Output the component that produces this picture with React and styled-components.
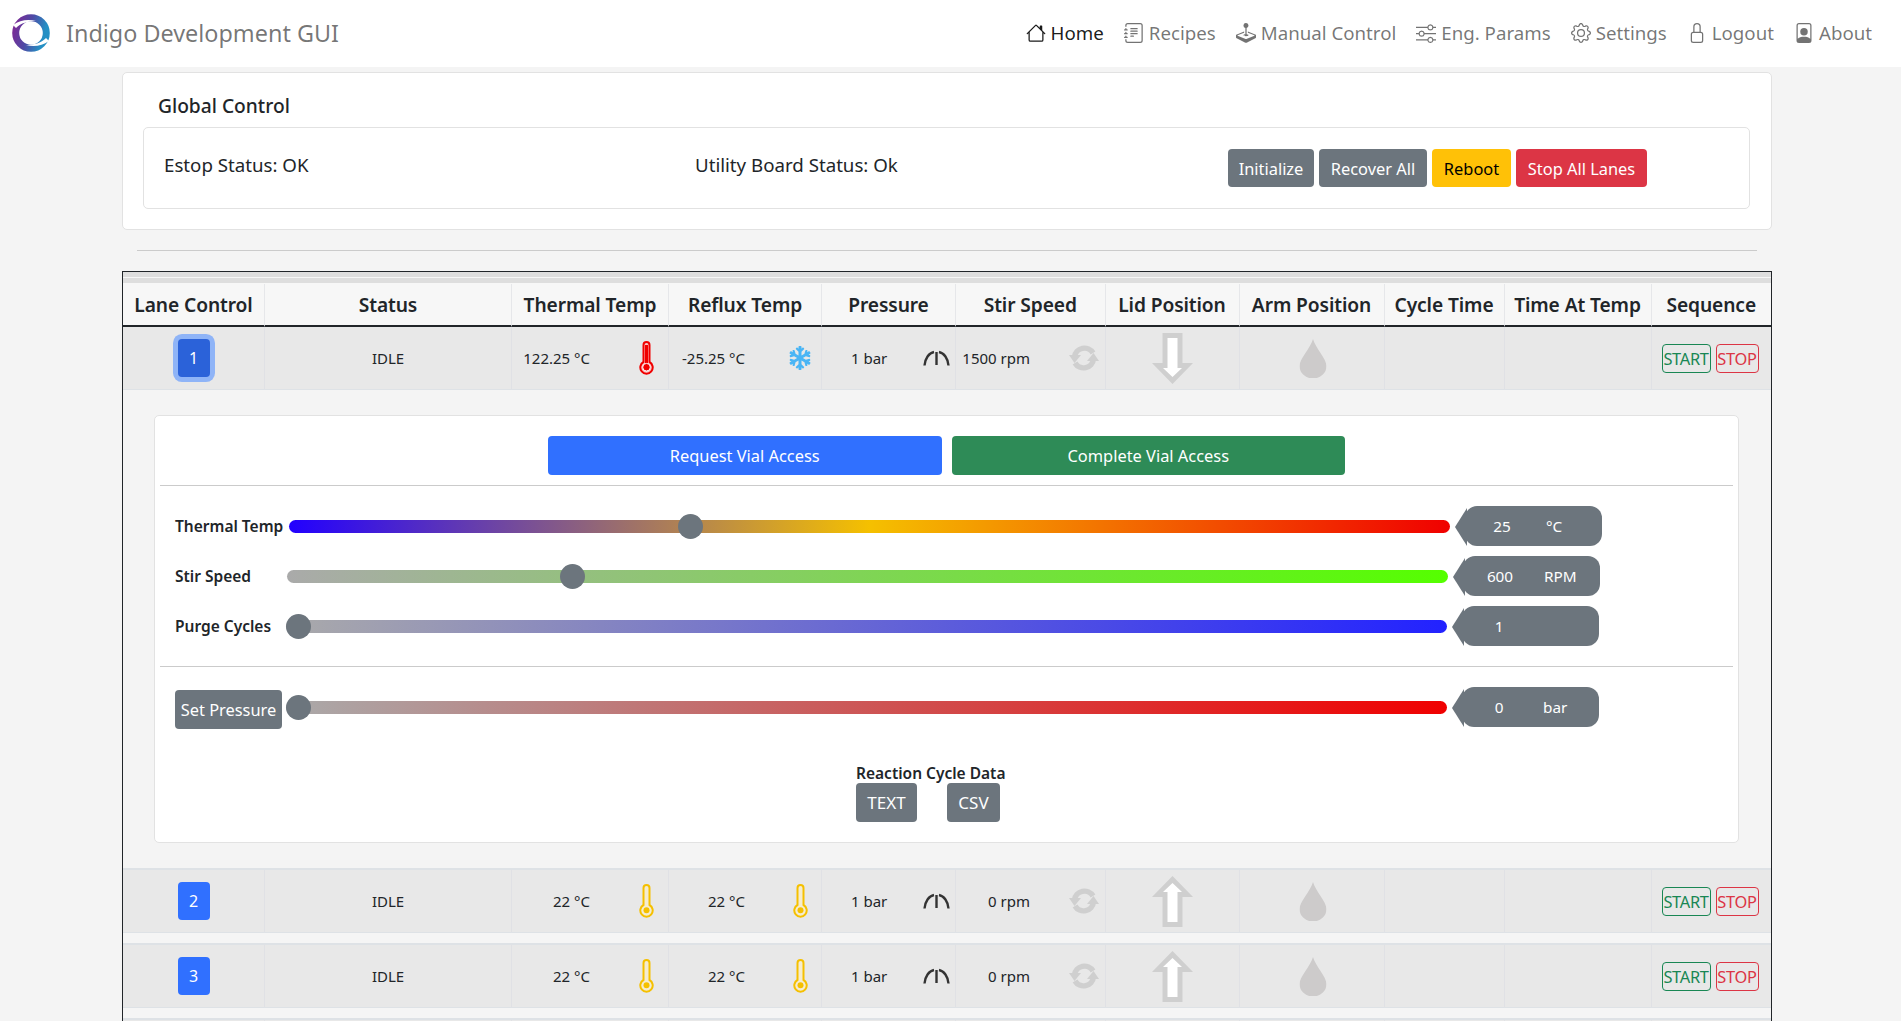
import styled, { createGlobalStyle } from "styled-components";
import { BsHouse, BsJournalText, BsJoystick, BsSliders, BsGear, BsLock, BsFilePerson } from "react-icons/bs";
import { FaSnowflake } from "react-icons/fa";

const GlobalStyle = createGlobalStyle`
  html, body {
    margin: 0;
    height: 100%;
    overflow: hidden;
    font-family: "Noto Sans", "Open Sans", sans-serif;
    font-size: 15px;
    color: #212529;
    background: #f4f4f4;
  }
  * { box-sizing: border-box; }
`;

const Page = styled.div`
  height: 100vh;
  overflow-y: scroll;
  background: #f4f4f4;

  &::-webkit-scrollbar { width: 4px; }
  &::-webkit-scrollbar-track { background: #f1f1f1; }
  &::-webkit-scrollbar-thumb { background: #c1c1c1; }
  &::-webkit-scrollbar-button:single-button { height: 17px; background: #f1f1f1; }
`;

const Navbar = styled.nav`
  height: 67px;
  background: #fff;
  display: flex;
  align-items: center;
  justify-content: space-between;
  padding: 0 29px 2px 12px;
`;

const Brand = styled.div`
  display: flex;
  align-items: center;
  gap: 16px;
  font-size: 23.4px;
  color: rgba(0, 0, 0, 0.55);
`;

const NavLinks = styled.div`
  display: flex;
  align-items: center;
  gap: 20px;
`;

const NavLink = styled.a`
  display: flex;
  align-items: center;
  gap: 5px;
  font-size: 18.7px;
  color: ${(p) => (p.$active ? "rgba(0,0,0,.9)" : "rgba(0,0,0,.55)")};

  svg { font-size: 20px; }
`;

const Main = styled.main`
  width: 1650px;
  margin-left: 122px;
  min-height: 2068px;
  padding-top: 5px;
`;

const GlobalCard = styled.section`
  height: 158px;
  background: #fff;
  border: 1px solid #e2e2e2;
  border-radius: 5px;
  padding: 0 21px 20px 20px;
  display: flex;
  flex-direction: column;
`;

const CardTitle = styled.h2`
  margin: 0;
  height: 54px;
  line-height: 66px;
  padding-left: 15px;
  font-size: 19.2px;
  font-weight: 500;
`;

const InnerCard = styled.div`
  flex: 1;
  border: 1px solid #e2e2e2;
  border-radius: 5px;
  padding: 21px 0 0 20px;
  display: grid;
  grid-template-columns: 531px 533px auto;
  align-items: start;
`;

const StatusText = styled.div`
  font-size: 18.7px;
  line-height: 24px;
  margin-top: 4px;
`;

const ButtonRow = styled.div`
  display: flex;
  gap: 5px;
`;

const colors = {
  grey: ["#6c757d", "#fff"],
  yellow: ["#ffc107", "#000"],
  red: ["#dc3545", "#fff"],
  blue: ["#3070ff", "#fff"],
  green: ["#2e8b57", "#fff"],
};

const Button = styled.button`
  height: ${(p) => p.$h || 38}px;
  width: ${(p) => p.$w}px;
  padding: 0;
  border: 0;
  border-radius: 4px;
  font-family: inherit;
  font-size: ${(p) => p.$size || 16.4}px;
  background: ${(p) => colors[p.$color][0]};
  color: ${(p) => colors[p.$color][1]};
`;

const PressureButton = styled(Button)`
  display: block;
  margin-top: 4px;
`;

const Rule = styled.hr`
  border: 0;
  height: 1px;
  background: #cbcbcb;
  margin: ${(p) => p.$margin};
`;

const TableFrame = styled.div`
  border: 1px solid #212529;
  border-bottom: 0;
  width: 1650px;
  background: #f4f4f4;
`;

const Table = styled.table`
  width: 100%;
  table-layout: fixed;
  border-collapse: separate;
  border-spacing: 0;
`;

const Col = styled.col`
  width: ${(p) => p.$w}px;
`;

const Stripe = styled.th`
  padding: 0;
  height: ${(p) => p.$h}px;
  background: #dedede;
  border-bottom: 1px solid #f7f7f7;
`;

const HeadCell = styled.th`
  height: 43px;
  padding: 0;
  background: #f7f7f7;
  border-right: 1px solid #e6e7ea;
  border-bottom: 2px solid #212529;
  font-size: 19.2px;
  font-weight: 600;
  white-space: nowrap;
  letter-spacing: -0.1px;
  overflow: visible;

  &:last-child { border-right: 0; }
`;

const Cell = styled.td`
  height: ${(p) => p.$h}px;
  padding: 0;
  background: #e8e8e8;
  border-right: 1px solid #e0e1e5;
  border-bottom: 1px solid #dee2e6;
  border-top: ${(p) => (p.$first ? "0" : "2px solid #dee2e6")};
  text-align: center;
  vertical-align: middle;
  font-size: 15px;

  &:last-child { border-right: 0; }
`;

const LaneButton = styled.button`
  width: 32px;
  height: 38px;
  padding: 0;
  border: 0;
  border-radius: 4px;
  font-family: inherit;
  font-size: 16px;
  color: #fff;
  background: ${(p) => (p.$open ? "#2b62d9" : "#3070ff")};
  box-shadow: ${(p) => (p.$open ? "0 0 0 5px #8fb4f7" : "none")};
`;

const Reading = styled.div`
  display: flex;
  align-items: center;
  height: 100%;
`;

const ReadingValue = styled.span`
  width: ${(p) => p.$w}px;
  text-align: ${(p) => p.$align || "right"};
  padding-left: ${(p) => p.$pad || 0}px;
  white-space: nowrap;
`;

const ReadingIcon = styled.span`
  width: 40px;
  margin-left: ${(p) => p.$gap}px;
  display: flex;
  justify-content: center;
  align-items: center;
`;

const SequenceButtons = styled.div`
  display: flex;
  align-items: center;
  gap: 5px;
  padding-left: 10px;
`;

const OutlineButton = styled.button`
  width: ${(p) => p.$w}px;
  height: 29px;
  padding: 0;
  background: transparent;
  border: 1px solid ${(p) => p.$c};
  border-radius: 4px;
  color: ${(p) => p.$c};
  font-family: inherit;
  font-size: 16.4px;
  letter-spacing: -0.3px;
  white-space: nowrap;
`;

const Spacer = styled.td`
  height: 10px;
  padding: 0;
  background: #f5f5f5;
`;

const DetailCell = styled.td`
  padding: 25px 32px 25px 31px;
  background: #f4f4f4;
`;

const DetailCard = styled.div`
  height: 428px;
  background: #fff;
  border: 1px solid #e2e2e2;
  border-radius: 5px;
  padding: 20px 5px 0;
`;

const AccessRow = styled.div`
  display: flex;
  justify-content: center;
  gap: 10px;
`;

const SliderRow = styled.div`
  height: 50px;
  display: flex;
  align-items: center;
  padding-left: 15px;
`;

const SliderLabel = styled.div`
  width: ${(p) => p.$w}px;
  font-size: 15.5px;
  font-weight: 600;
  white-space: nowrap;
  flex: none;
`;

const Track = styled.div`
  position: relative;
  width: 1161px;
  height: 13px;
  border-radius: 7px;
  background: ${(p) => p.$bg};
  flex: none;
`;

const Thumb = styled.div`
  position: absolute;
  left: ${(p) => p.$left}px;
  top: -6px;
  width: 25px;
  height: 25px;
  margin-left: -12.5px;
  border-radius: 50%;
  background: #6c757d;
`;

const Output = styled.div`
  position: relative;
  width: 137px;
  height: 40px;
  margin-left: 15px;
  border-radius: 12px;
  background: #6c757d;
  color: #fff;
  font-size: 15.3px;
  display: flex;
  align-items: center;

  &::before {
    content: "";
    position: absolute;
    left: -10px;
    top: 2px;
    width: 12px;
    height: 38px;
    background: #6c757d;
    clip-path: polygon(100% 0, 0 50%, 100% 100%);
  }
`;

const OutputValue = styled.span`
  width: 74px;
  text-align: center;
`;

const OutputUnit = styled.span`
  margin-left: 7px;
`;

const CycleData = styled.div`
  margin: 31px 0 0 696px;
  width: 150px;
`;

const CycleTitle = styled.div`
  font-size: 15.5px;
  font-weight: 600;
  line-height: 20px;
  white-space: nowrap;
`;

const CycleButtons = styled.div`
  display: flex;
  gap: 30px;
`;

const ArrowSvg = styled.svg`
  display: block;
  margin: auto;
  transform: ${(p) => (p.$down ? "rotate(180deg)" : "none")};
`;

const DropSvg = styled.svg`
  display: block;
  margin: auto;
  transform: translateX(1.5px);
`;

const Logo = () => (
  <svg width="38" height="38" viewBox="0 0 38 38">
    <defs>
      <linearGradient id="logoGrad" x1="0" y1="0" x2="1" y2="0.3">
        <stop offset="0" stopColor="#7c2a96" />
        <stop offset="0.5" stopColor="#4f4aa5" />
        <stop offset="1" stopColor="#2590c4" />
      </linearGradient>
    </defs>
    <circle cx="19" cy="19" r="15.3" fill="none" stroke="url(#logoGrad)" strokeWidth="7" />
    <path d="M1 11 C8 6 16 5 24 7 C16 7 9 9 4 14 Z" fill="#fff" />
    <path d="M37 27 C30 32 22 33 14 31 C22 31 29 29 34 24 Z" fill="#fff" />
  </svg>
);

const Thermometer = ({ color, hot }) => (
  <svg width="15" height="34" viewBox="0 0 15 34">
    <path
      d="M4.5 21V4a3 3 0 0 1 6 0v17a6.2 6.2 0 1 1-6 0z"
      fill={hot ? "#f9c8c8" : "#f5ecd0"}
      stroke={color}
      strokeWidth="2"
    />
    {hot && <rect x="6" y="4" width="3" height="19" fill={color} />}
    <circle cx="7.5" cy="26.2" r={hot ? 3.8 : 3} fill={color} stroke={hot ? "#fff" : "none"} strokeWidth="1" />
  </svg>
);

const Gauge = () => (
  <svg width="27" height="16" viewBox="0 0 27 16" fill="none" stroke="#333" strokeWidth="2.4">
    <path d="M1.500 15.500C2 8.500 6 3 11 2" />
    <path d="M25.500 15.500C25 8.500 21 3 16 2" />
    <path d="M13.500 2V15" />
  </svg>
);

const SyncIcon = () => (
  <svg width="30" height="28" viewBox="0 0 30 28" fill="none" stroke="#cfcfcf" strokeWidth="5.5">
    <path d="M24 9A10 10 0 0 0 5.500 13" />
    <path d="M6 19A10 10 0 0 0 24.500 15" />
    <polygon points="0,11 12,11 5.500,19" fill="#cfcfcf" stroke="none" />
    <polygon points="18,17 30,17 24.500,9" fill="#cfcfcf" stroke="none" />
  </svg>
);

const Arrow = ({ down }) => (
  <ArrowSvg width="41" height="51" viewBox="0 0 41 51" $down={down}>
    <polygon points="20.500,0 41,21 30.500,21 30.500,51 10.500,51 10.500,21 0,21" fill="#cfcfcf" />
    <polygon points="20.500,7 30,16 25.500,16 25.500,46 15.500,46 15.500,16 11,16" fill="#fff" />
  </ArrowSvg>
);

const Drop = () => (
  <DropSvg width="27" height="39" viewBox="0 0 27 39">
    <path d="M13.500 0C11 9 0 20 0 27a13.500 12.500 0 0 0 27 0C27 20 16 9 13.500 0z" fill="#cdcbcb" />
  </DropSvg>
);

const navItems = [
  { label: "Home", Icon: BsHouse, active: true },
  { label: "Recipes", Icon: BsJournalText },
  { label: "Manual Control", Icon: BsJoystick },
  { label: "Eng. Params", Icon: BsSliders },
  { label: "Settings", Icon: BsGear },
  { label: "Logout", Icon: BsLock },
  { label: "About", Icon: BsFilePerson },
];

const columns = [
  ["Lane Control", 142],
  ["Status", 247],
  ["Thermal Temp", 157],
  ["Reflux Temp", 153],
  ["Pressure", 134],
  ["Stir Speed", 149.5],
  ["Lid Position", 134],
  ["Arm Position", 145],
  ["Cycle Time", 120],
  ["Time At Temp", 147],
  ["Sequence", 119.5],
];

const lanes = [
  { id: 1, thermal: "122.25 °C", reflux: "-25.25 °C", stir: "1500 rpm", open: true },
  ...[2, 3, 4, 5, 6, 7, 8].map((id) => ({ id, thermal: "22 °C", reflux: "22 °C", stir: "0 rpm" })),
];

const RED = "#f00000";
const YELLOW = "#f5c000";

const LaneRow = ({ lane, first }) => {
  const h = first ? 63 : 65;
  return (
    <tr>
      <Cell $h={h} $first={first}>
        <LaneButton $open={lane.open}>{lane.id}</LaneButton>
      </Cell>
      <Cell $h={h} $first={first}>IDLE</Cell>
      <Cell $h={h} $first={first}>
        <Reading>
          <ReadingValue $w={78}>{lane.thermal}</ReadingValue>
          <ReadingIcon $gap={36}>
            <Thermometer color={lane.open ? RED : YELLOW} hot={lane.open} />
          </ReadingIcon>
        </Reading>
      </Cell>
      <Cell $h={h} $first={first}>
        <Reading>
          <ReadingValue $w={76}>{lane.reflux}</ReadingValue>
          <ReadingIcon $gap={35}>
            {lane.open ? <FaSnowflake size={24} color="#49b5f5" /> : <Thermometer color={YELLOW} />}
          </ReadingIcon>
        </Reading>
      </Cell>
      <Cell $h={h} $first={first}>
        <Reading>
          <ReadingValue $w={66} $align="left" $pad={29}>1 bar</ReadingValue>
          <ReadingIcon $gap={30}>
            <Gauge />
          </ReadingIcon>
        </Reading>
      </Cell>
      <Cell $h={h} $first={first}>
        <Reading>
          <ReadingValue $w={74}>{lane.stir}</ReadingValue>
          <ReadingIcon $gap={34}>
            <SyncIcon />
          </ReadingIcon>
        </Reading>
      </Cell>
      <Cell $h={h} $first={first}>
        <Arrow down={lane.open} />
      </Cell>
      <Cell $h={h} $first={first}>
        <Drop />
      </Cell>
      <Cell $h={h} $first={first} />
      <Cell $h={h} $first={first} />
      <Cell $h={h} $first={first}>
        <SequenceButtons>
          <OutlineButton $w={49} $c="#198754">START</OutlineButton>
          <OutlineButton $w={43} $c="#dc3545">STOP</OutlineButton>
        </SequenceButtons>
      </Cell>
    </tr>
  );
};

const sliders = [
  { label: "Thermal Temp", w: 114, bg: "linear-gradient(90deg,#2200ff,#f5c000 50%,#f00000)", left: 401.6, value: 25, unit: "°C" },
  { label: "Stir Speed", w: 112, bg: "linear-gradient(90deg,#aaa,#55ff00)", left: 285, value: 600, unit: "RPM" },
  { label: "Purge Cycles", w: 111, bg: "linear-gradient(90deg,#aaa,#2222ff)", left: 12, value: 1, unit: "" },
];

const LaneDetail = () => (
  <DetailCard>
    <AccessRow>
      <Button $color="blue" $w={393.5} $h={39}>Request Vial Access</Button>
      <Button $color="green" $w={393.5} $h={39}>Complete Vial Access</Button>
    </AccessRow>
    <Rule $margin="10px 0 15px" />
    {sliders.map((s) => (
      <SliderRow key={s.label}>
        <SliderLabel $w={s.w}>{s.label}</SliderLabel>
        <Track $bg={s.bg}>
          <Thumb $left={s.left} />
        </Track>
        <Output>
          <OutputValue>{s.value}</OutputValue>
          <OutputUnit>{s.unit}</OutputUnit>
        </Output>
      </SliderRow>
    ))}
    <Rule $margin="15px 0 15px" />
    <SliderRow>
      <SliderLabel $w={111}>
        <PressureButton $color="grey" $w={107} $h={39}>Set Pressure</PressureButton>
      </SliderLabel>
      <Track $bg="linear-gradient(90deg,#aaa,#f00000)">
        <Thumb $left={12} />
      </Track>
      <Output>
        <OutputValue>0</OutputValue>
        <OutputUnit>bar</OutputUnit>
      </Output>
    </SliderRow>
    <CycleData>
      <CycleTitle>Reaction Cycle Data</CycleTitle>
      <CycleButtons>
        <Button $color="grey" $w={61} $h={39} $size={17}>TEXT</Button>
        <Button $color="grey" $w={53} $h={39} $size={17}>CSV</Button>
      </CycleButtons>
    </CycleData>
  </DetailCard>
);

const App = () => {
  return (
    <Page>
      <GlobalStyle />
      <Navbar>
        <Brand>
          <Logo />
          Indigo Development GUI
        </Brand>
        <NavLinks>
          {navItems.map(({ label, Icon, active }) => (
            <NavLink key={label} $active={active}>
              <Icon />
              {label}
            </NavLink>
          ))}
        </NavLinks>
      </Navbar>
      <Main>
        <GlobalCard>
          <CardTitle>Global Control</CardTitle>
          <InnerCard>
            <StatusText>Estop Status: OK</StatusText>
            <StatusText>Utility Board Status: Ok</StatusText>
            <ButtonRow>
              <Button $color="grey" $w={86}>Initialize</Button>
              <Button $color="grey" $w={108}>Recover All</Button>
              <Button $color="yellow" $w={79}>Reboot</Button>
              <Button $color="red" $w={131}>Stop All Lanes</Button>
            </ButtonRow>
          </InnerCard>
        </GlobalCard>
        <Rule $margin="20px 15px 20px" />
        <TableFrame>
          <Table>
            <colgroup>
              {columns.map(([name, w]) => (
                <Col key={name} $w={w} />
              ))}
            </colgroup>
            <thead>
              <tr><Stripe colSpan={11} $h={6} /></tr>
              <tr><Stripe colSpan={11} $h={6} /></tr>
              <tr>
                {columns.map(([name]) => (
                  <HeadCell key={name}>{name}</HeadCell>
                ))}
              </tr>
            </thead>
            <tbody>
              {lanes.map((lane, i) => [
                <LaneRow key={lane.id} lane={lane} first={i === 0} />,
                lane.open ? (
                  <tr key="detail"><DetailCell colSpan={11}><LaneDetail /></DetailCell></tr>
                ) : (
                  <tr key={`gap${lane.id}`}><Spacer colSpan={11} /></tr>
                ),
              ])}
            </tbody>
          </Table>
        </TableFrame>
      </Main>
    </Page>
  );
};

export default App;
